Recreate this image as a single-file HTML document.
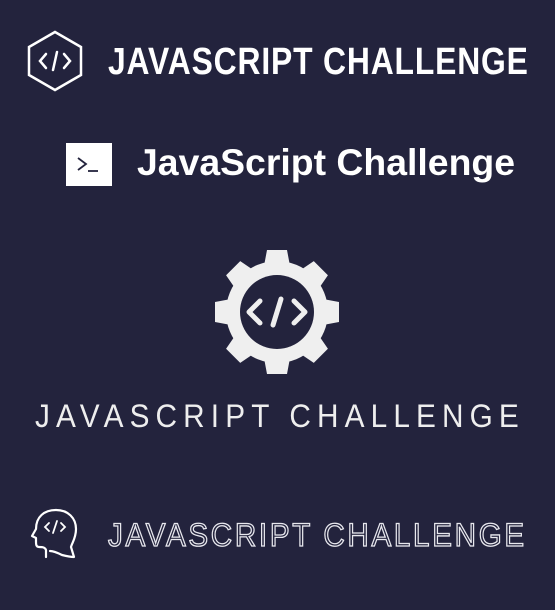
<!DOCTYPE html>
<html><head><meta charset="utf-8">
<style>
html,body{margin:0;padding:0;}
body{width:555px;height:610px;background:#23233d;position:relative;overflow:hidden;font-family:"Liberation Sans",sans-serif;color:#fff;}
.abs{position:absolute;white-space:nowrap;}
#t1{left:108px;top:40px;font-size:38px;font-weight:bold;letter-spacing:1px;transform-origin:0 0;transform:scaleX(0.838);line-height:44px;}
#t2{left:137px;top:141px;font-size:37px;font-weight:bold;line-height:44px;transform-origin:0 0;transform:scaleX(1.01);}
#t3{left:35px;top:398px;font-size:32px;letter-spacing:6.6px;line-height:36px;color:#eeeeee;transform-origin:0 0;transform:scaleX(0.93);}
#t4{left:108px;top:517px;font-size:32px;letter-spacing:2.9px;line-height:36px;color:transparent;-webkit-text-stroke:1.3px #e8e8ee;transform-origin:0 0;transform:scaleX(0.925);}
</style></head><body>
<svg class="abs" style="left:26px;top:30px" width="60" height="62" viewBox="0 0 60 62">
<polygon points="29,2 55,17 55,45 29,60 3,45 3,17" fill="none" stroke="#fff" stroke-width="2.5"/>
<polyline points="20,24 14,31 20,38" fill="none" stroke="#fff" stroke-width="2.5" stroke-linecap="round"/>
<polyline points="38,24 44,31 38,38" fill="none" stroke="#fff" stroke-width="2.5" stroke-linecap="round"/>
<line x1="31" y1="22" x2="27" y2="40" stroke="#fff" stroke-width="2.5" stroke-linecap="round"/>
</svg>
<div class="abs" id="t1">JAVASCRIPT CHALLENGE</div>
<svg class="abs" style="left:66px;top:143px" width="46" height="43" viewBox="0 0 46 43">
<rect width="46" height="43" fill="#fff"/>
<polyline points="12,15 20,21 12,27" fill="none" stroke="#23233d" stroke-width="1.8"/>
<line x1="22" y1="28" x2="32" y2="28" stroke="#23233d" stroke-width="1.8"/>
</svg>
<div class="abs" id="t2">JavaScript Challenge</div>
<svg class="abs" style="left:215px;top:250px" width="124" height="124" viewBox="-62 -62 124 124">
<g fill="#efefef">
<circle r="51"/>
<g id="tooth"><polygon points="-13,-46 -10,-62 10,-62 13,-46"/></g>
<use href="#tooth" transform="rotate(45)"/>
<use href="#tooth" transform="rotate(90)"/>
<use href="#tooth" transform="rotate(135)"/>
<use href="#tooth" transform="rotate(180)"/>
<use href="#tooth" transform="rotate(225)"/>
<use href="#tooth" transform="rotate(270)"/>
<use href="#tooth" transform="rotate(315)"/>
</g>
<circle r="37" fill="#23233d"/>
<g fill="none" stroke="#efefef" stroke-width="5" stroke-linecap="round" stroke-linejoin="round">
<polyline points="-17,-11 -28,0 -17,11"/>
<polyline points="17,-11 28,0 17,11"/>
<line x1="4" y1="-13" x2="-4" y2="13"/>
</g>
</svg>
<div class="abs" id="t3">JAVASCRIPT CHALLENGE</div>
<svg class="abs" style="left:30px;top:505px" width="52" height="56" viewBox="0 0 52 56">
<path d="M16,52 L16,45 C15,42 12,42 9,42 C6,42 6,39 6,37 L6,33 L2,31 L6,24 C6,12 14,5 26,5 C38,5 46,13 46,24 C46,33 42,38 41,42 L44,52 C40,52 36,51 32,50 C28,48 24,46 20,46" fill="none" stroke="#fff" stroke-width="2.2" stroke-linejoin="round" stroke-linecap="round"/>
<g fill="none" stroke="#fff" stroke-width="1.8" stroke-linecap="round">
<polyline points="19,18 15,22 19,26"/>
<polyline points="31,18 35,22 31,26"/>
<line x1="27" y1="16" x2="23" y2="28"/>
</g>
</svg>
<div class="abs" id="t4">JAVASCRIPT CHALLENGE</div>
</body></html>
